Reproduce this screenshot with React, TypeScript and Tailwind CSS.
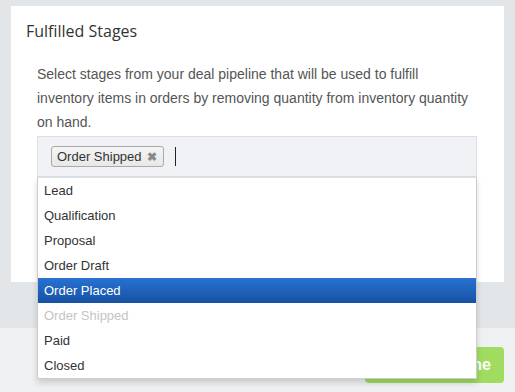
import React from "react";

const items = [
  { label: "Lead" },
  { label: "Qualification" },
  { label: "Proposal" },
  { label: "Order Draft" },
  { label: "Order Placed", active: true },
  { label: "Order Shipped", disabled: true },
  { label: "Paid" },
  { label: "Closed" },
];

export default function App() {
  return (
    <div
      className="w-[515px] h-[392px] overflow-hidden flex flex-col bg-[#eef0f2]"
      style={{ fontFamily: '"Liberation Sans", Arial, sans-serif' }}
    >
      <div className="bg-[#e2e6e9] px-[11px] pt-[6px] pb-[46px]">
        <div className="bg-white h-[276px] pt-[14px] px-[15px]">
          <div
            className="text-[16px] leading-[22px] text-[#333]"
            style={{ fontFamily: '"Open Sans", sans-serif' }}
          >
            Fulfilled Stages
          </div>
          <div className="pl-[11px] pr-[12px] mt-[20px]">
            <p className="text-[14px] leading-[24px] text-[#555]">
              Select stages from your deal pipeline that will be used to fulfill inventory items in orders by removing
              quantity from inventory quantity on hand.
            </p>
            <div className="relative mt-[2px]">
              <div className="h-[41px] border border-[#dcdfe3] bg-[#f0f2f5] flex items-start pl-[13px] pt-[9px]">
                <div className="h-[21px] flex items-center border border-[#aaa] rounded-[3px] bg-gradient-to-b from-[#f4f4f4] to-[#e8e8e8] pl-[5px] pr-[6px] text-[13px] text-[#333] leading-none">
                  Order Shipped
                  <span className="ml-[5px] text-[12px] font-bold text-[#888]">✖</span>
                </div>
                <div className="ml-[11px] mt-[1px] w-[1px] h-[19px] bg-[#222]" />
              </div>
              <div className="absolute left-0 right-0 top-full bg-white border border-[#ccc] border-t-[#dcdfe3] shadow-[0_4px_6px_rgba(0,0,0,0.15)] z-10">
                {items.map((it) => (
                  <div
                    key={it.label}
                    className={
                      "h-[25px] flex items-center pl-[6px] text-[13px] " +
                      (it.active
                        ? "bg-gradient-to-b from-[#2872d3] to-[#1652a4] text-white"
                        : it.disabled
                        ? "text-[#c4c4c4]"
                        : "text-[#333]")
                    }
                  >
                    {it.label}
                  </div>
                ))}
              </div>
            </div>
          </div>
        </div>
      </div>
      <div className="flex justify-end pr-[11px] pt-[19px]">
        <div className="w-[139px] h-[36px] rounded-[4px] bg-[#9fdc5f] flex items-center justify-end pr-[13px] text-white text-[16px] font-bold">
          Done
        </div>
      </div>
    </div>
  );
}
